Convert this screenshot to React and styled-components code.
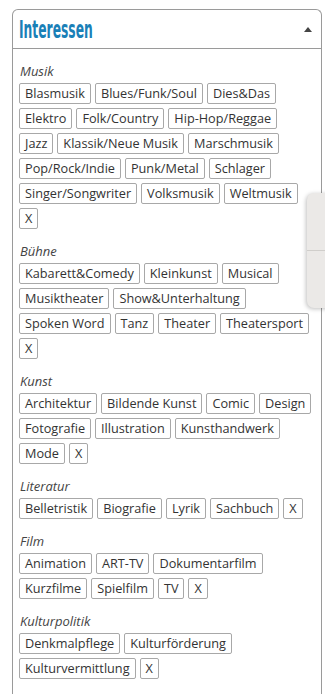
import React, { useState } from 'react';
import styled, { createGlobalStyle } from 'styled-components';

const GlobalStyle = createGlobalStyle`
  body {
    margin: 0;
    background: #fff;
    font-family: "Open Sans", "Liberation Sans", sans-serif;
  }
`;

// Kategorien und ihre Schlagworte
const categories = [
  {
    name: 'Musik',
    tags: [
      'Blasmusik', 'Blues/Funk/Soul', 'Dies&Das', 'Elektro', 'Folk/Country',
      'Hip-Hop/Reggae', 'Jazz', 'Klassik/Neue Musik', 'Marschmusik',
      'Pop/Rock/Indie', 'Punk/Metal', 'Schlager', 'Singer/Songwriter',
      'Volksmusik', 'Weltmusik',
    ],
  },
  {
    name: 'Bühne',
    tags: [
      'Kabarett&Comedy', 'Kleinkunst', 'Musical', 'Musiktheater',
      'Show&Unterhaltung', 'Spoken Word', 'Tanz', 'Theater', 'Theatersport',
    ],
  },
  {
    name: 'Kunst',
    tags: [
      'Architektur', 'Bildende Kunst', 'Comic', 'Design', 'Fotografie',
      'Illustration', 'Kunsthandwerk', 'Mode',
    ],
  },
  {
    name: 'Literatur',
    tags: ['Belletristik', 'Biografie', 'Lyrik', 'Sachbuch'],
  },
  {
    name: 'Film',
    tags: ['Animation', 'ART-TV', 'Dokumentarfilm', 'Kurzfilme', 'Spielfilm', 'TV'],
  },
  {
    name: 'Kulturpolitik',
    tags: ['Denkmalpflege', 'Kulturförderung', 'Kulturvermittlung'],
  },
];

function App() {
  const [open, setOpen] = useState(true);

  return (
    <>
      <GlobalStyle />
      <Page>
        <Panel>
          <Header onClick={() => setOpen(!open)}>
            <Title>Interessen</Title>
            <Caret $open={open} />
          </Header>
          {open && (
            <Body>
              {categories.map((cat) => (
                <Section key={cat.name}>
                  <Label>{cat.name}</Label>
                  <Tags>
                    {cat.tags.map((t) => (
                      <Tag key={t}>{t}</Tag>
                    ))}
                    <Tag>X</Tag>
                  </Tags>
                </Section>
              ))}
            </Body>
          )}
        </Panel>
        <SideHandle>
          <HandlePart />
          <HandlePart />
        </SideHandle>
      </Page>
    </>
  );
}

const Page = styled.div`
  position: relative;
  padding: 9px 3px 0 12px;
`;

const Panel = styled.div`
  width: 310px;
  box-sizing: border-box;
  border: 1px solid #9a9a9a;
  border-bottom: none;
  border-radius: 6px 6px 0 0;
  background: #fff;
`;

const Header = styled.div`
  display: flex;
  align-items: center;
  justify-content: space-between;
  height: 38px;
  padding: 0 9px 0 6px;
  border-bottom: 1px solid #9a9a9a;
  cursor: pointer;
`;

const Title = styled.div`
  font-family: "DejaVu Sans Condensed", "Liberation Sans", sans-serif;
  font-weight: 700;
  font-size: 24px;
  color: #1a80b7;
  transform: scaleX(0.57);
  transform-origin: left center;
  margin-top: 2px;
  white-space: nowrap;
`;

const Caret = styled.span`
  width: 0;
  height: 0;
  border-left: 4px solid transparent;
  border-right: 4px solid transparent;
  border-bottom: 5px solid #444;
  margin-top: 1px;
  transform: ${(p) => (p.$open ? 'none' : 'rotate(180deg)')};
`;

const Body = styled.div`
  padding: 12px 9px 40px 6px;
`;

const Section = styled.div`
  & + & {
    margin-top: 12px;
  }
`;

const Label = styled.div`
  font-style: italic;
  font-size: 13px;
  line-height: 20px;
  color: #444;
  margin: 0 0 2px 1px;
`;

const Tags = styled.div`
  display: flex;
  flex-wrap: wrap;
  gap: 4px 4px;
`;

const Tag = styled.span`
  display: inline-block;
  font-size: 12.7px;
  line-height: 17px;
  padding: 1px 5px;
  border: 1px solid #a8a8a8;
  border-radius: 2px;
  color: #333;
  cursor: pointer;
`;

const SideHandle = styled.div`
  position: absolute;
  top: 193px;
  left: 307px;
  width: 30px;
  height: 115px;
  border-radius: 7px 0 0 7px;
  background: #ebe9e7;
  box-shadow: -1px 1px 4px rgba(0, 0, 0, 0.25);
  display: flex;
  flex-direction: column;
  overflow: hidden;
`;

const HandlePart = styled.div`
  flex: 1;
  & + & {
    border-top: 1px solid #d0cecb;
  }
`;

export default App;
